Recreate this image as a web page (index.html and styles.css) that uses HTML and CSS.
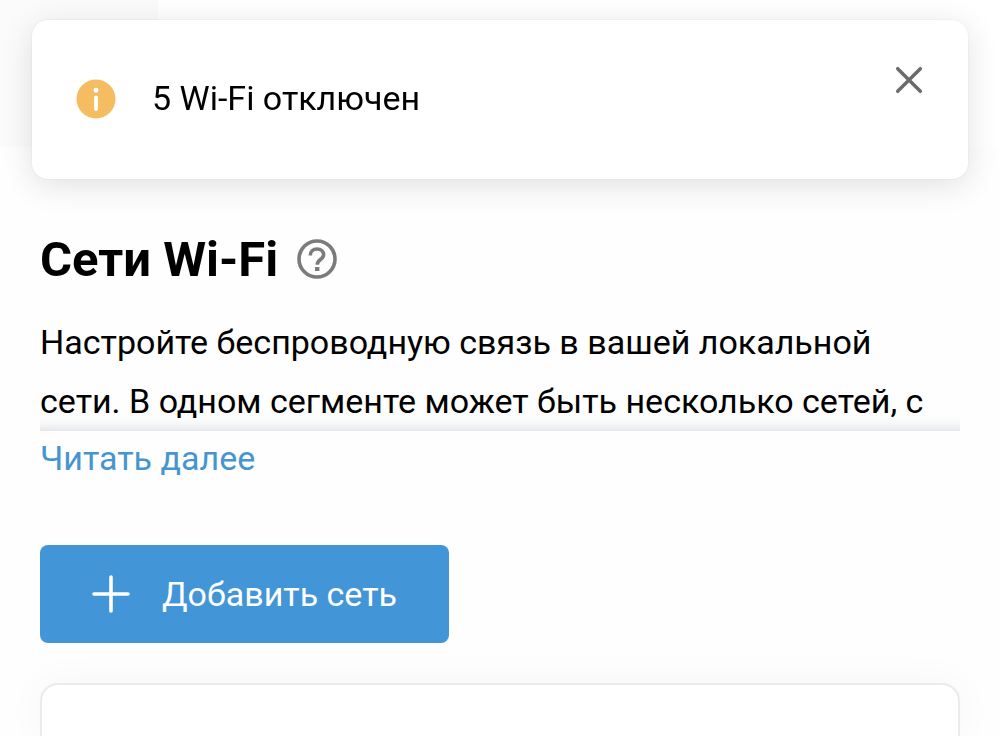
FILE: index.html
```html
<!DOCTYPE html>
<html lang="ru">
<head>
  <meta charset="UTF-8">
  <meta name="viewport" content="width=device-width, initial-scale=1.0">
  <title>Сети Wi-Fi</title>
  <link rel="stylesheet" href="styles.css">
</head>
<body>
  <!-- Notification -->
  <div class="toast" role="status">
    <svg class="toast-icon" viewBox="0 0 42 42" aria-hidden="true">
      <circle cx="21" cy="21" r="20.5" fill="#f5bd62"/>
      <circle cx="21" cy="11.8" r="2.6" fill="#fff"/>
      <path d="M21 19.2V31.5" stroke="#fff" stroke-width="4" stroke-linecap="round"/>
    </svg>
    <p class="toast-text">5 Wi-Fi отключен</p>
    <button class="toast-close" type="button" aria-label="Закрыть">
      <svg class="close-icon" viewBox="0 0 26 26" aria-hidden="true">
        <path d="M2.5 2.5l21 21M23.5 2.5l-21 21" stroke="#6b6b6b" stroke-width="3.2" stroke-linecap="round"/>
      </svg>
    </button>
  </div>

  <header class="header">
    <div class="header-menu"></div>
  </header>

  <main class="container">
    <div class="title">
      <h1>Сети Wi-Fi</h1>
      <button class="help" type="button" aria-label="Справка">
        <svg class="help-icon" viewBox="0 0 40 40" fill="none" aria-hidden="true">
          <circle cx="20" cy="20" r="18" stroke="#7b7b7b" stroke-width="3.6"/>
          <path d="M13.3 16.4c0-4 2.8-6.4 6.7-6.4 3.9 0 6.6 2.3 6.6 5.7 0 4.8-6.4 4.9-6.4 10" stroke="#7b7b7b" stroke-width="3.6"/>
          <path d="M18 28h4.4v4H18z" fill="#7b7b7b"/>
        </svg>
      </button>
    </div>

    <div class="description">
      <p>Настройте беспроводную связь в вашей локальной сети. В одном сегменте может быть несколько сетей, с</p>
    </div>
    <a class="read-more" href="#">Читать далее</a>

    <button class="add-button" type="button">
      <svg class="plus-icon" viewBox="0 0 38 38" aria-hidden="true">
        <path d="M19 2v34M2 19h34" stroke="#fff" stroke-width="3.6" stroke-linecap="round"/>
      </svg>
      Добавить сеть
    </button>

    <section class="card"></section>
  </main>
</body>
</html>
```
FILE: styles.css
```css
* {
  box-sizing: border-box;
}
body {
  display: flex;
  flex-direction: column;
  min-height: 100vh;
  margin: 0;
  font-family: Roboto, "Noto Sans", sans-serif;
  font-size: 34px;
  line-height: 59px;
  background-color: #fefefe;
  color: #000000;
}
h1, p {
  margin: 0;
}
button {
  font: inherit;
  border: none;
  padding: 0;
  cursor: pointer;
}
svg {
  display: block;
}

.toast {
  position: fixed;
  top: 20px;
  left: 32px;
  right: 32px;
  display: flex;
  align-items: center;
  padding: 46px 44px 48px;
  min-height: 159px;
  background-color: #ffffff;
  border-radius: 16px;
  box-shadow: 0 0 2px rgba(0, 0, 0, 0.1), 0 6px 32px rgba(0, 0, 0, 0.12);
}
.toast-icon {
  width: 40px;
  height: 42px;
  margin-right: 36px;
}
.toast-text {
  flex: 1;
}
.toast-close {
  align-self: flex-start;
  background: none;
}
.close-icon {
  width: 30px;
  height: 28px;
}

.header {
  display: flex;
  height: 147px;
  background-color: #ffffff;
}
.header-menu {
  width: 158px;
  background-color: #fbfbfb;
}

.container {
  flex: 1;
  display: flex;
  flex-direction: column;
  padding: 80px 40px 0;
}
.title {
  display: flex;
  align-items: center;
  gap: 19px;
  height: 64px;
}
.title h1 {
  font-size: 49px;
  font-weight: 700;
}
.help {
  background: none;
}
.help-icon {
  width: 40px;
  height: 40px;
}

.description {
  padding-top: 22px;
  box-shadow: inset 0 -16px 14px -14px rgba(90, 100, 125, 0.24);
}
.read-more {
  align-self: flex-start;
  line-height: 54px;
  color: #4695d1;
  text-decoration: none;
}

.add-button {
  align-self: flex-start;
  display: flex;
  align-items: center;
  gap: 32px;
  height: 98px;
  margin-top: 60px;
  padding: 0 52px;
  border-radius: 8px;
  background-color: #4295d7;
  color: #ffffff;
}
.plus-icon {
  width: 38px;
  height: 38px;
}

.card {
  flex: 1;
  min-height: 50px;
  margin-top: 40px;
  border: 2px solid #ebebeb;
  border-bottom: none;
  border-radius: 18px 18px 0 0;
  background-color: #ffffff;
  box-shadow: 0 0 40px rgba(0, 0, 0, 0.04);
}
```
